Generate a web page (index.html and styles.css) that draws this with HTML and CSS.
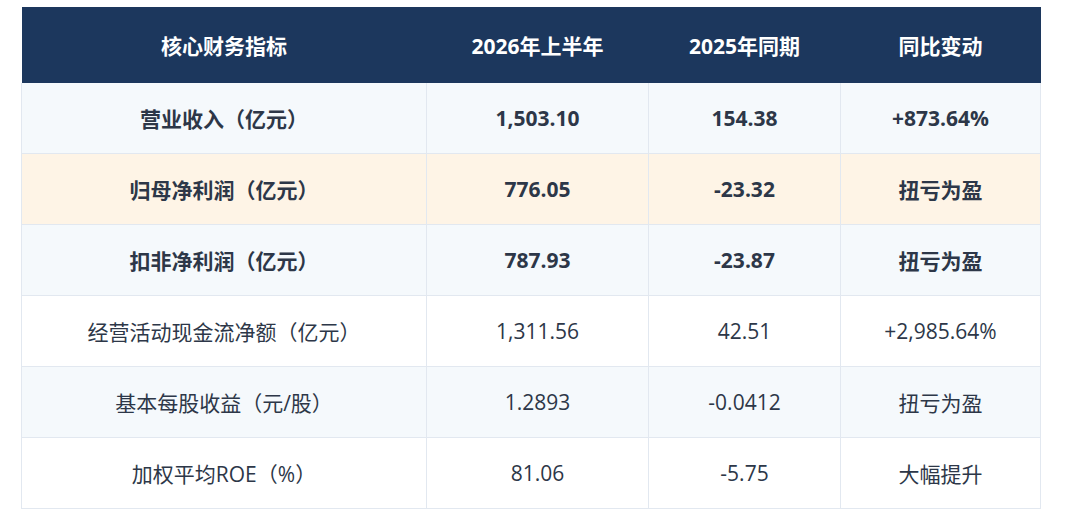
FILE: index.html
```html
<!DOCTYPE html>
<html lang="zh-CN">
<head>
<meta charset="utf-8">
<title>核心财务指标</title>
<link rel="stylesheet" href="styles.css">
</head>
<body>
<div class="wrap">
<table class="fin">
<colgroup>
<col class="c1"><col class="c2"><col class="c3"><col class="c4">
</colgroup>
<thead>
<tr><th>核心财务指标</th><th>2026年上半年</th><th>2025年同期</th><th>同比变动</th></tr>
</thead>
<tbody>
<tr class="alt strong"><td>营业收入（亿元）</td><td>1,503.10</td><td>154.38</td><td>+873.64%</td></tr>
<tr class="hl strong"><td>归母净利润（亿元）</td><td>776.05</td><td>-23.32</td><td>扭亏为盈</td></tr>
<tr class="alt strong"><td>扣非净利润（亿元）</td><td>787.93</td><td>-23.87</td><td>扭亏为盈</td></tr>
<tr><td>经营活动现金流净额（亿元）</td><td>1,311.56</td><td>42.51</td><td>+2,985.64%</td></tr>
<tr class="alt"><td>基本每股收益（元/股）</td><td>1.2893</td><td>-0.0412</td><td>扭亏为盈</td></tr>
<tr><td>加权平均ROE（%）</td><td>81.06</td><td>-5.75</td><td>大幅提升</td></tr>
</tbody>
</table>
</div>
</body>
</html>
```
FILE: styles.css
```css
html, body {
  margin: 0;
  padding: 0;
  background: #ffffff;
}
.wrap {
  padding: 7px 0 0 21px;
}
.fin {
  width: 1019px;
  table-layout: fixed;
  border-collapse: collapse;
  font-family: "Open Sans", "Noto Sans CJK SC", sans-serif;
  font-size: 21px;
  color: #2d3748;
}
.c1 { width: 405px; }
.c2 { width: 222px; }
.c3 { width: 192px; }
.c4 { width: 200px; }
.fin th {
  background: #1c375d;
  color: #ffffff;
  font-weight: 700;
  height: 76px;
  padding: 0;
  text-align: center;
  border: none;
}
.fin td {
  height: 70px;
  padding: 0;
  text-align: center;
  border: 1px solid #e2e8f0;
}
.fin tbody tr:first-child td {
  border-top: none;
}
.alt td { background: #f5f9fc; }
.hl td { background: #fef4e6; }
.strong td { font-weight: 700; }
```
